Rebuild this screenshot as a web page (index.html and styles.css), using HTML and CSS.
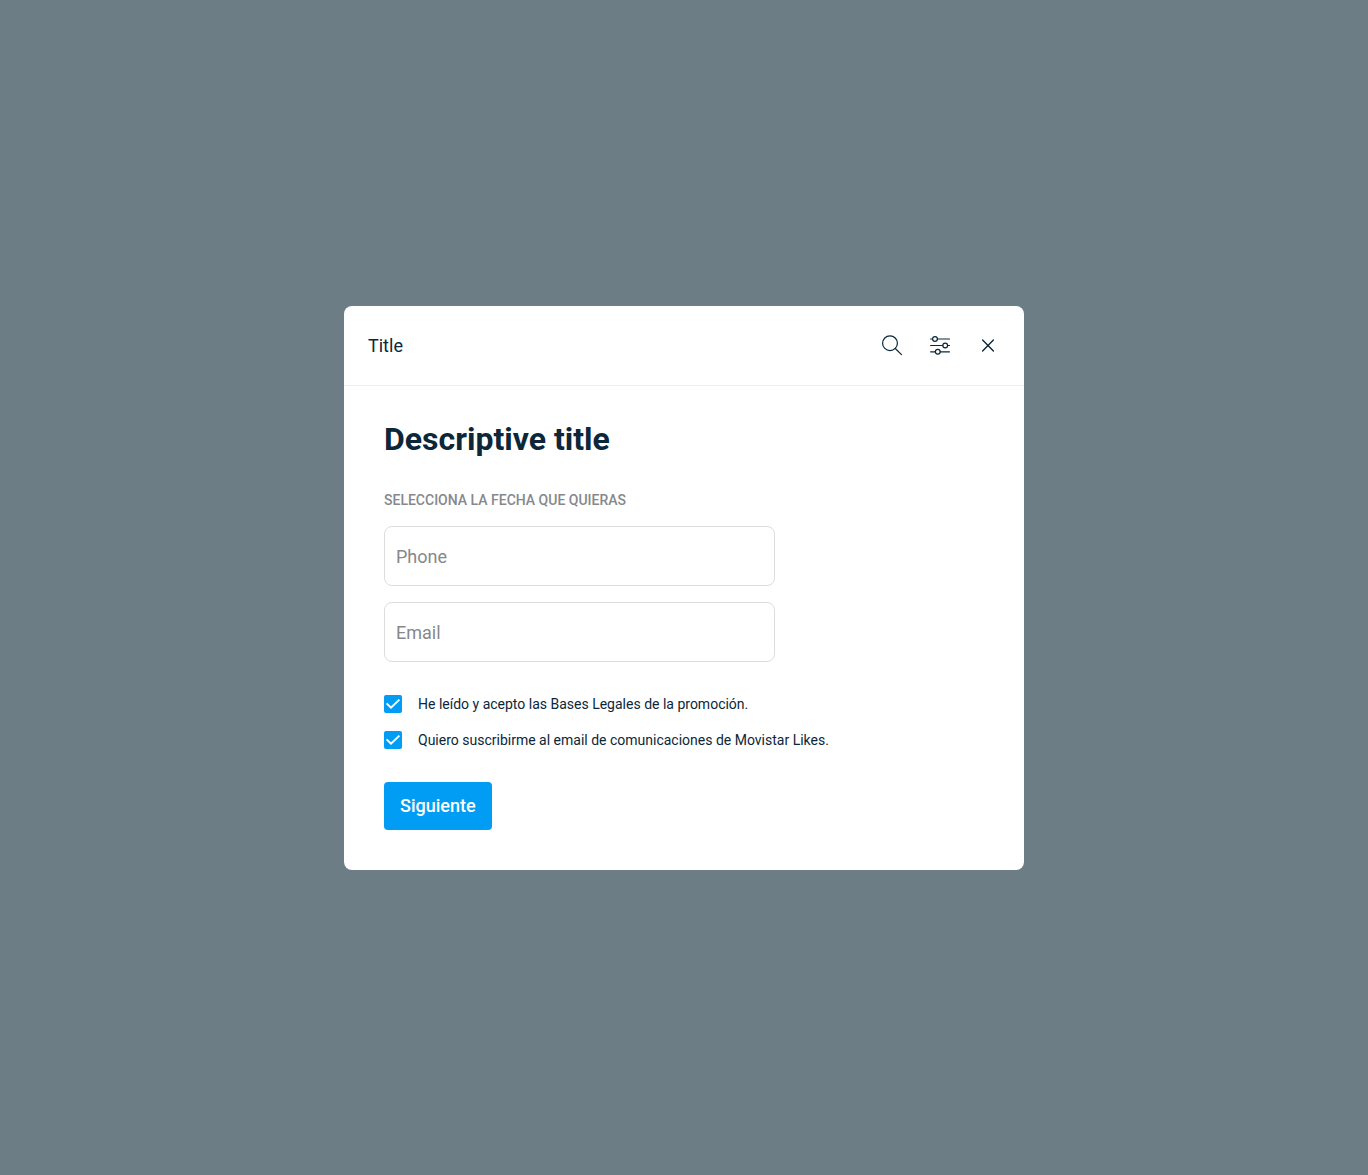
FILE: index.html
```html
<!DOCTYPE html>
<html lang="es">
<head>
<meta charset="utf-8">
<meta name="viewport" content="width=device-width, initial-scale=1">
<title>Title</title>
<link rel="stylesheet" href="styles.css">
</head>
<body>
<main class="backdrop">
  <section class="dialog" role="dialog" aria-labelledby="dialog-title">
    <header class="dialog-header">
      <h1 class="dialog-title" id="dialog-title">Title</h1>
      <div class="actions">
        <button class="icon-button" type="button" aria-label="Buscar">
          <svg class="icon" viewBox="0 0 24 24"><circle cx="10" cy="9.2" r="7.4"/><path d="M15.3 14.5 21.5 20.7"/></svg>
        </button>
        <button class="icon-button" type="button" aria-label="Filtros">
          <svg class="icon" viewBox="0 0 24 24"><path d="M2.6 5h2M9.4 5h12.1M2.6 11.5h12.2M19.6 11.5h1.9M2.6 17.8h4.8M12.2 17.8h9.3"/><circle cx="7" cy="5" r="2.4"/><circle cx="17.2" cy="11.5" r="2.4"/><circle cx="9.8" cy="17.8" r="2.4"/></svg>
        </button>
        <button class="icon-button" type="button" aria-label="Cerrar">
          <svg class="icon icon-close" viewBox="0 0 24 24"><path d="M6.6 6.1 17.4 16.9M17.4 6.1 6.6 16.9"/></svg>
        </button>
      </div>
    </header>
    <form class="dialog-body">
      <h2 class="heading">Descriptive title</h2>
      <fieldset class="fields">
        <legend class="legend">SELECCIONA LA FECHA QUE QUIERAS</legend>
        <input class="field" type="tel" placeholder="Phone" aria-label="Phone">
        <input class="field" type="email" placeholder="Email" aria-label="Email">
      </fieldset>
      <div class="checks">
        <label class="check"><input class="check-box" type="checkbox" checked><span>He leído y acepto las Bases Legales de la promoción.</span></label>
        <label class="check"><input class="check-box" type="checkbox" checked><span>Quiero suscribirme al email de comunicaciones de Movistar Likes.</span></label>
      </div>
      <button class="submit" type="submit">Siguiente</button>
    </form>
  </section>
</main>
</body>
</html>
```
FILE: styles.css
```css
* {
  box-sizing: border-box;
}

body {
  margin: 0;
  color: #0b2739;
  font-family: Roboto, "Liberation Sans", sans-serif;
}

.backdrop {
  display: grid;
  place-items: center;
  min-height: 100vh;
  padding: 17px 16px 16px;
  background: #6d7d86;
}

.dialog {
  width: 100%;
  max-width: 680px;
  overflow: hidden;
  border-radius: 8px;
  background: #fff;
}

.dialog-header {
  display: flex;
  align-items: center;
  justify-content: space-between;
  min-height: 80px;
  padding: 0 24px;
  border-bottom: 1px solid #eee;
}

.dialog-title {
  margin: 0;
  font-size: 18px;
  font-weight: 400;
  line-height: 24px;
}

.actions {
  display: flex;
  gap: 24px;
}

.icon-button {
  width: 24px;
  height: 24px;
  padding: 0;
  border: 0;
  background: none;
  color: inherit;
  cursor: pointer;
}

.icon {
  display: block;
  width: 24px;
  height: 24px;
  fill: none;
  stroke: currentColor;
  stroke-width: 1.2;
  stroke-linecap: round;
}

.icon-close {
  stroke-width: 1.4;
}

.dialog-body {
  padding: 32px 40px 40px;
}

.heading {
  margin: 0 0 30px;
  font-size: 32px;
  font-weight: 700;
  line-height: 42px;
}

.fields {
  display: flex;
  flex-direction: column;
  gap: 16px;
  max-width: 391px;
  min-width: 0;
  margin: 0;
  padding: 0;
  border: 0;
}

.legend {
  margin-bottom: 16px;
  padding: 0;
  color: #86888c;
  font-size: 14px;
  font-weight: 500;
  line-height: 20px;
}

.field {
  width: 100%;
  height: 60px;
  padding: 0 11px;
  border: 1px solid #ddd;
  border-radius: 8px;
  background: #fff;
  color: inherit;
  font: 400 18px/24px Roboto, "Liberation Sans", sans-serif;
}

.field::placeholder {
  color: #86888c;
  opacity: 1;
}

.checks {
  display: flex;
  flex-direction: column;
  gap: 16px;
  margin: 32px 0;
}

.check {
  display: flex;
  align-items: center;
  gap: 16px;
  font-size: 14px;
  line-height: 20px;
}

.check-box {
  flex: none;
  width: 18px;
  height: 18px;
  margin: 0;
  appearance: none;
  border: 1px solid #86888c;
  border-radius: 2px;
}

.check-box:checked {
  border: 0;
  background: #019df4 url("data:image/svg+xml,%3Csvg xmlns='http://www.w3.org/2000/svg' viewBox='0 0 18 18'%3E%3Cpath d='M2.6 8.4 7 12.6 15.4 4.6' fill='none' stroke='white' stroke-width='2'/%3E%3C/svg%3E") center / 18px 18px no-repeat;
}

.submit {
  display: block;
  height: 48px;
  padding: 0 16px;
  border: 0;
  border-radius: 4px;
  background: #019df4;
  color: #fff;
  font: 500 18px/24px Roboto, "Liberation Sans", sans-serif;
  cursor: pointer;
}
```
